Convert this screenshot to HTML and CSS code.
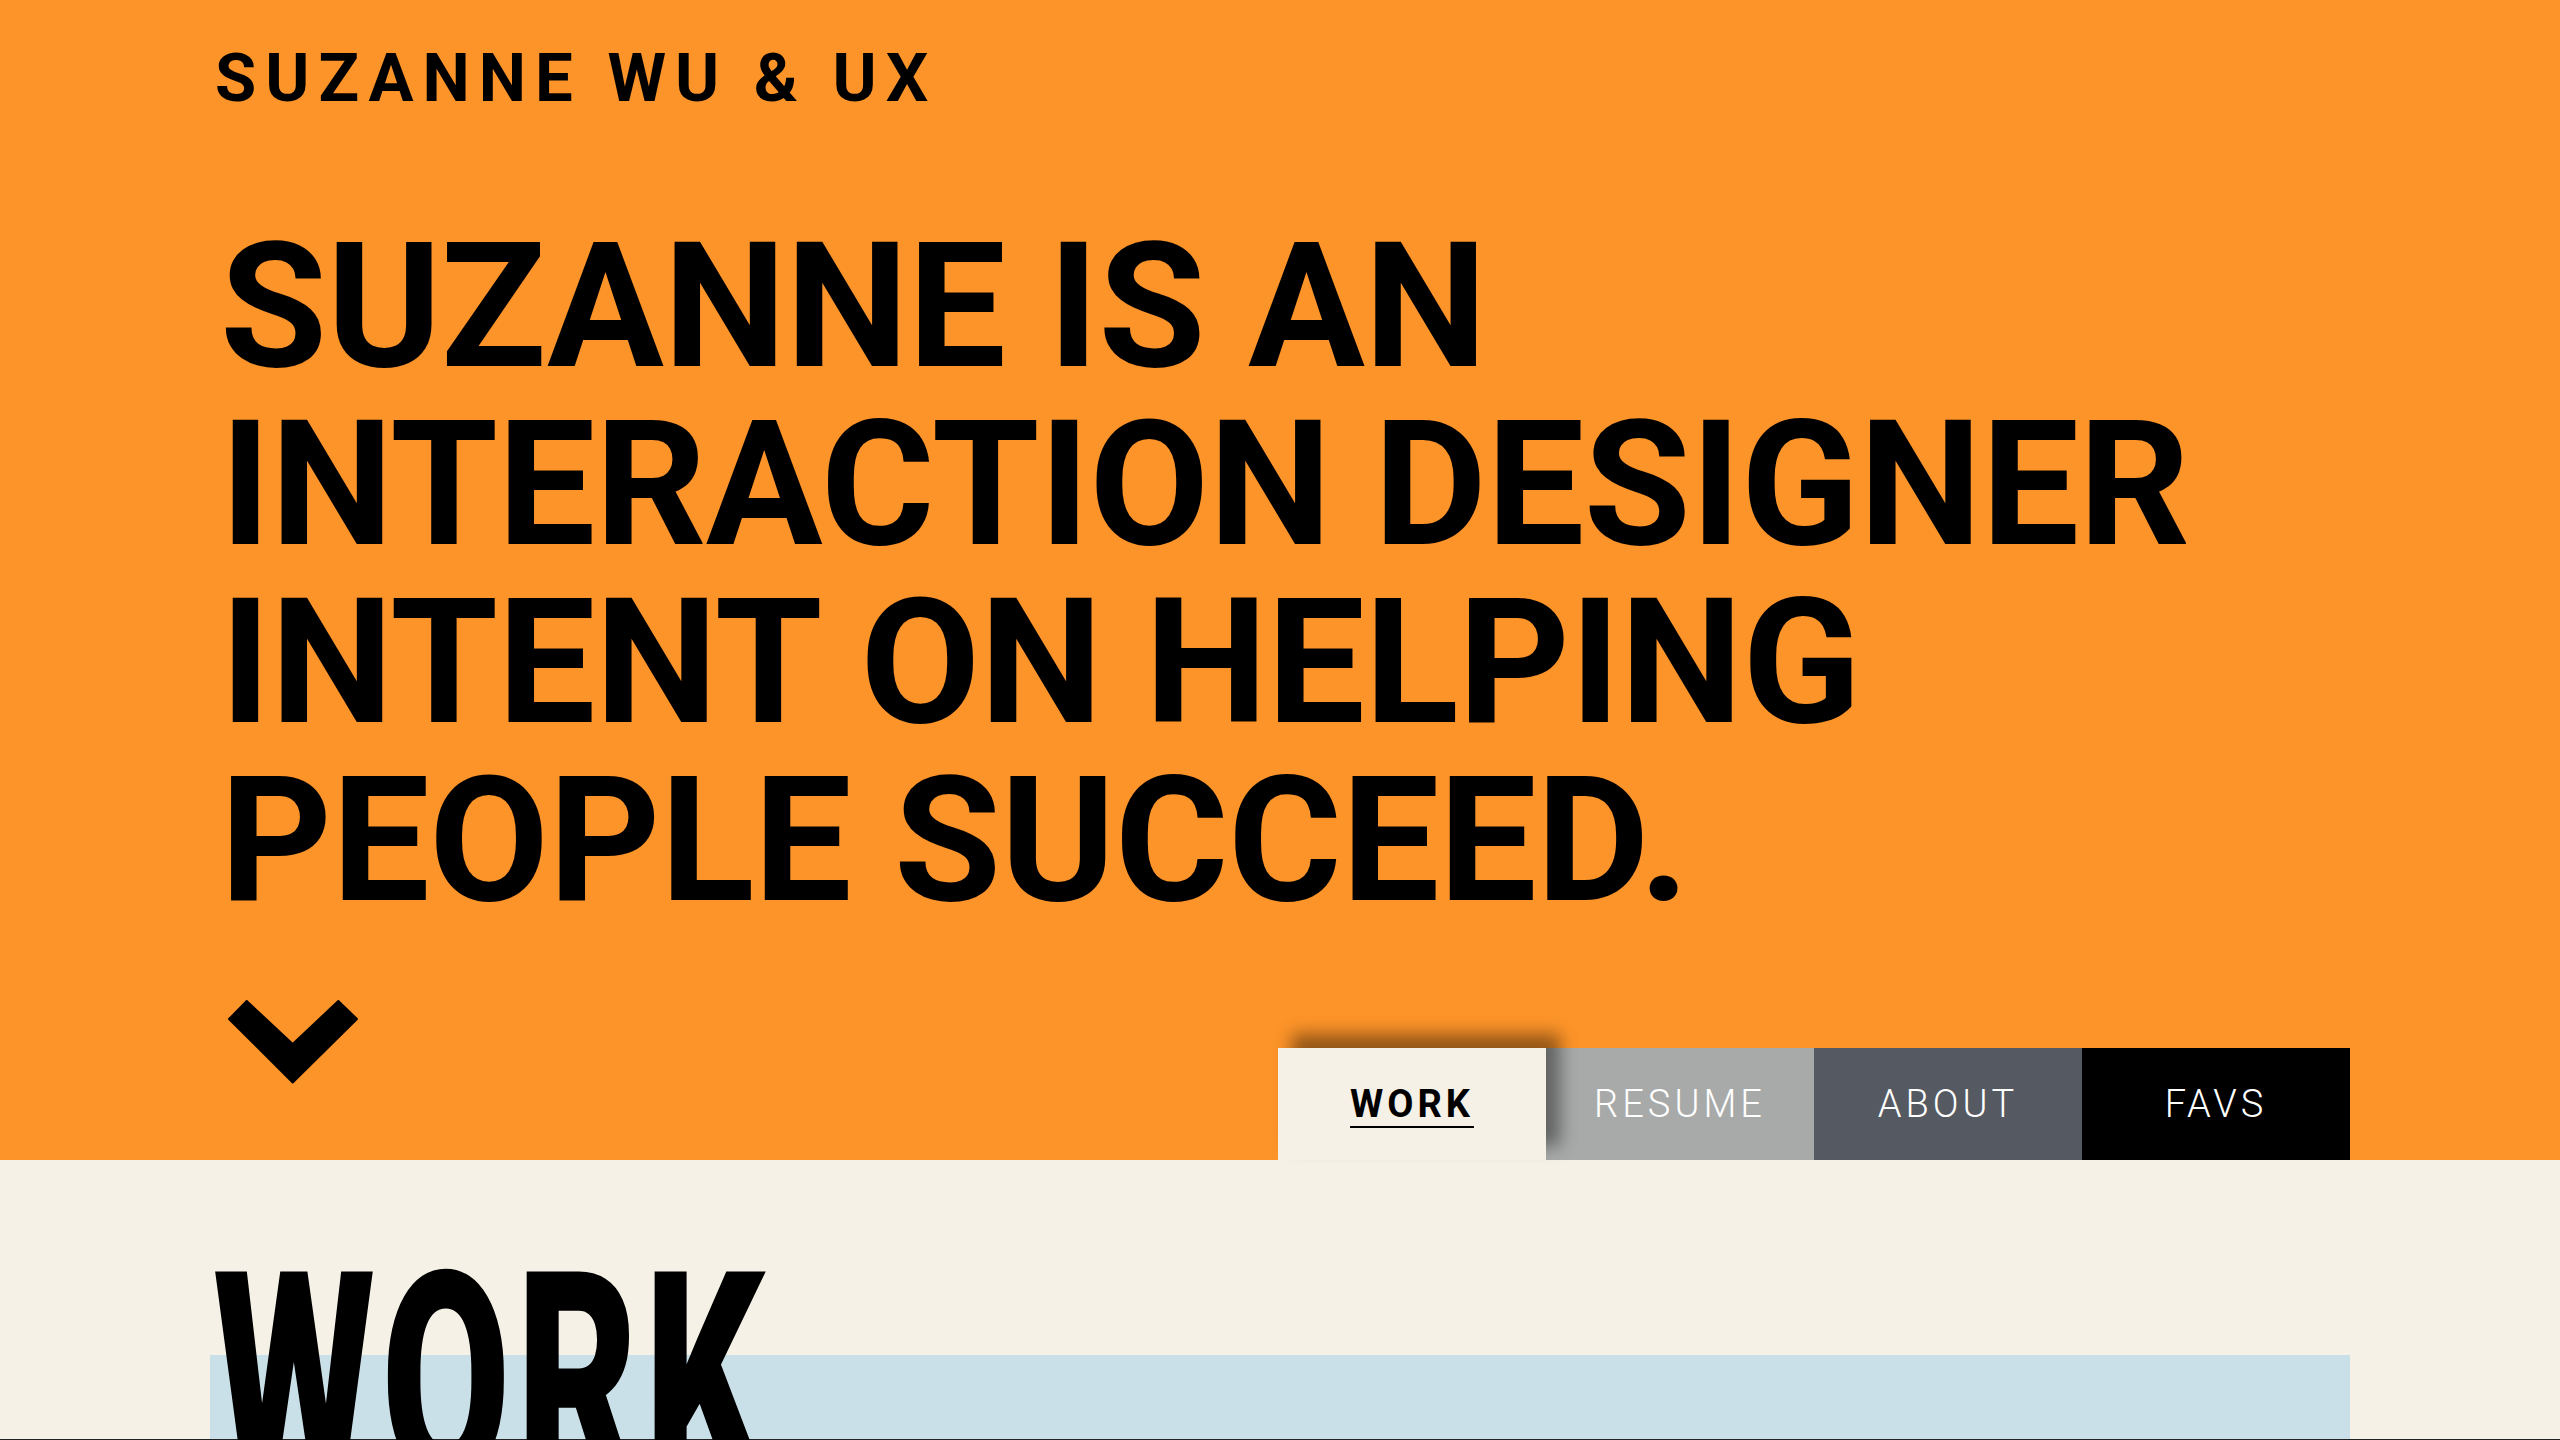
FILE: index.html
```html
<!DOCTYPE html>
<html lang="en">
<head>
<meta charset="utf-8">
<title>Suzanne Wu &amp; UX</title>
<link rel="stylesheet" href="styles.css">
</head>
<body>
<header class="hero">
  <div class="container">
    <div class="brand">SUZANNE WU &amp; UX</div>
    <h1 class="headline">SUZANNE IS AN<br>INTERACTION DESIGNER<br>INTENT ON HELPING<br>PEOPLE SUCCEED.</h1>
    <div class="hero-bottom">
      <a class="scroll-down" href="#work" aria-label="Scroll down">
        <svg width="130" height="84" viewBox="0 0 130 84"><path d="M18.7 1 L64.7 44 L110.3 1 L129 19 L64.7 82.5 L1 19 Z" fill="#000" stroke="#000" stroke-width="2" stroke-linejoin="round"/></svg>
      </a>
      <nav class="tabs">
        <a class="tab tab-work active" href="#work">WORK</a>
        <a class="tab tab-resume" href="#resume">RESUME</a>
        <a class="tab tab-about" href="#about">ABOUT</a>
        <a class="tab tab-favs" href="#favs">FAVS</a>
      </nav>
    </div>
  </div>
</header>
<main class="content" id="work">
  <div class="container">
    <h2 class="section-title"><span class="section-title-inner">WORK</span></h2>
    <div class="project-card"></div>
  </div>
</main>
<div class="fold-line"></div>
</body>
</html>
```

FILE: styles.css
```css
html, body {
  margin: 0;
  padding: 0;
}
body {
  background: #f5f1e6;
  font-family: Roboto, "Liberation Sans", sans-serif;
  color: #000;
  overflow: hidden;
}
.container {
  margin: 0 210px;
}
.hero {
  background: #fd9429;
}
.hero .container {
  padding-top: 45px;
}
.brand {
  font-size: 67px;
  line-height: 1;
  font-weight: 700;
  letter-spacing: 9px;
  height: 67px;
  padding-left: 5px;
  white-space: nowrap;
}
.headline {
  margin: 106px 0 0 0;
  padding-left: 10px;
  font-size: 174px;
  line-height: 178px;
  font-weight: 700;
  letter-spacing: -0.5px;
  white-space: nowrap;
}
.hero-bottom {
  margin-top: 70px;
  display: flex;
  justify-content: space-between;
}
.scroll-down {
  display: block;
  width: 130px;
  height: 84px;
  margin-left: 18px;
  align-self: flex-start;
}
.scroll-down svg {
  display: block;
}
.tabs {
  display: flex;
  margin-top: 48px;
}
.tab {
  width: 268px;
  height: 112px;
  display: flex;
  align-items: center;
  justify-content: center;
  font-size: 38px;
  letter-spacing: 4px;
  font-weight: 300;
  color: #fff;
  text-decoration: none;
}
.tab-work {
  background: #f5f1e6;
  color: #000;
  font-weight: 700;
  position: relative;
  z-index: 2;
  box-shadow: 14px -14px 16px rgba(0, 0, 0, 0.42);
}
.tab-work.active {
  text-decoration: underline;
  text-decoration-thickness: 2px;
  text-underline-offset: 9px;
}
.tab-resume { background: #a8aaa9; }
.tab-about { background: #555a62; }
.tab-favs { background: #000; }

.content .container {
  padding-top: 73px;
}
.section-title {
  margin: 0;
  font-size: 296px;
  line-height: 1;
  font-weight: 900;
  height: 296px;
  position: relative;
  z-index: 1;
}
.section-title-inner {
  display: inline-block;
  transform: scaleX(0.63);
  transform-origin: left center;
  letter-spacing: 10px;
  padding-left: 5px;
}
.project-card {
  margin-top: -174px;
  height: 600px;
  background: #c9e0e8;
}
.fold-line {
  position: fixed;
  left: 0;
  right: 0;
  bottom: 0;
  height: 1px;
  background: #222;
}
```
